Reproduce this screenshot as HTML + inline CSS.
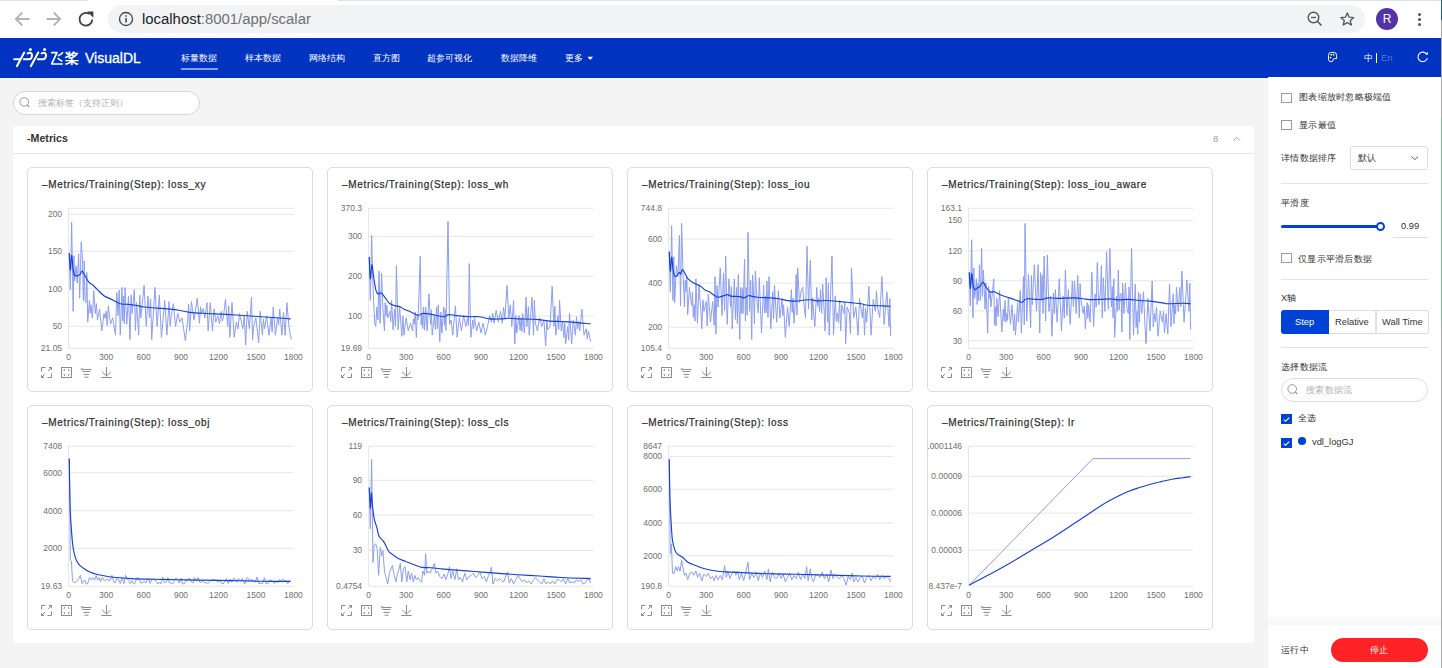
<!DOCTYPE html>
<html><head><meta charset="utf-8">
<style>
*{box-sizing:border-box;margin:0;padding:0}
html,body{width:1442px;height:668px;overflow:hidden;background:#fff;font-family:"Liberation Sans",sans-serif;position:relative}
.abs{position:absolute}
#chrome{position:absolute;left:0;top:0;width:1442px;height:38px;background:#fff}
#url{position:absolute;left:108px;top:5px;width:1257px;height:28px;border-radius:14px;background:#f1f3f4}
#urltext{position:absolute;left:142px;top:10.5px;font-size:14.9px;color:#6f6f6f;letter-spacing:0;white-space:nowrap}
#urltext b{font-weight:normal;color:#202124}
#nav{position:absolute;left:0;top:38px;width:1441px;height:40px;background:#0033bf}
.nv{position:absolute;top:14px;font-size:9.4px;color:#fff;white-space:nowrap;line-height:11px}
#main{position:absolute;left:0;top:78px;width:1268px;height:590px;background:#f4f4f4}
#side{position:absolute;left:1268px;top:77px;width:173px;height:591px;background:#fff}
#search{position:absolute;left:13px;top:91px;width:187px;height:24px;border:1px solid #d6d6d6;border-radius:12px;background:#fff}
#panel{position:absolute;left:13px;top:126px;width:1241px;height:517px;background:#fff;border-radius:3px}
#ph{position:absolute;left:0;top:0;width:1241px;height:28px;border-bottom:1px solid #e6e6e6}
.card{position:absolute;width:286px;height:225px;border:1px solid #dcdcdc;border-radius:5px;background:#fff}
.card .plot{position:absolute;left:-1px;top:-1px}
.ct{position:absolute;left:14px;top:10.5px;font-size:10px;line-height:12px;letter-spacing:0.68px;-webkit-text-stroke:0.25px #333;color:#333;white-space:nowrap}
.g{stroke:#e6e6e6;stroke-width:1;fill:none}
.yl{font-size:8.5px;fill:#707070;text-anchor:end;font-family:"Liberation Sans",sans-serif}
.xl{font-size:8.5px;fill:#707070;text-anchor:middle;font-family:"Liberation Sans",sans-serif}
.raw{fill:none;stroke:#8c9ef0;stroke-width:1;stroke-linejoin:round}
.sm{fill:none;stroke:#1641d8;stroke-width:1.15;stroke-linejoin:round}
.tb{position:absolute;left:8px;top:172px}
.sl{position:absolute;font-size:9.33px;letter-spacing:0.25px;color:#333;white-space:nowrap;line-height:11px;margin-top:1px}
.cb{position:absolute;width:11px;height:10px;border:1px solid #999;background:#fff}
.cbon{background:#0041d6;border-color:#0041d6}
.hr{position:absolute;left:1281px;width:147px;height:1px;background:#e2e2e2}
</style></head><body>
<div id="chrome">
  <div class="abs" style="left:0;top:0;width:88px;height:1px;background:#dee1e6"></div><div class="abs" style="left:338px;top:0;width:1103px;height:1px;background:#dee1e6"></div>
  <svg class="abs" style="left:0;top:0" width="100" height="38" viewBox="0 0 100 38">
    <g fill="none" stroke-width="1.8">
      <path d="M29.5 19 H16 M22.3 12.5 L15.8 19 L22.3 25.5" stroke="#b4b4b4"/>
      <path d="M46.5 19 H60 M53.7 12.5 L60.2 19 L53.7 25.5" stroke="#b4b4b4"/>
      <path d="M92.3 19.5 A6.4 6.4 0 1 1 89.6 14" stroke="#3c4043"/>
    </g>
    <path d="M87.2 11.6 L93.4 11.6 L93.4 17.8 Z" fill="#3c4043"/>
  </svg>
  <div id="url"></div>
  <svg class="abs" style="left:118px;top:11px" width="16" height="16" viewBox="0 0 16 16">
    <circle cx="8" cy="8" r="6.5" fill="none" stroke="#444" stroke-width="1.3"/>
    <rect x="7.3" y="7" width="1.5" height="4.5" fill="#444"/><rect x="7.3" y="4.3" width="1.5" height="1.5" fill="#444"/>
  </svg>
  <div id="urltext"><b>localhost</b>:8001/app/scalar</div>
  <svg class="abs" style="left:1306px;top:10px" width="20" height="20" viewBox="0 0 20 20">
    <circle cx="7.5" cy="7.5" r="5.3" fill="none" stroke="#555" stroke-width="1.4"/>
    <path d="M11.5 11.5 L15.5 15.5" stroke="#555" stroke-width="1.6"/>
    <path d="M5 7.5 H10" stroke="#555" stroke-width="1.3"/>
  </svg>
  <svg class="abs" style="left:1338px;top:9px" width="20" height="20" viewBox="0 0 20 20">
    <path d="M9.3 4 L11.2 8.2 L15.8 8.6 L12.3 11.6 L13.4 16 L9.3 13.6 L5.2 16 L6.3 11.6 L2.8 8.6 L7.4 8.2 Z" fill="none" stroke="#555" stroke-width="1.3" stroke-linejoin="round"/>
  </svg>
  <div class="abs" style="left:1376px;top:8px;width:22px;height:22px;border-radius:11px;background:#5433a8;color:#fff;font-size:12px;line-height:22px;text-align:center">R</div>
  <div class="abs" style="left:1417.8px;top:12.6px;width:3.3px;height:3.3px;border-radius:2px;background:#555"></div>
  <div class="abs" style="left:1417.8px;top:17.7px;width:3.3px;height:3.3px;border-radius:2px;background:#555"></div>
  <div class="abs" style="left:1417.8px;top:22.8px;width:3.3px;height:3.3px;border-radius:2px;background:#555"></div>
  
</div>
<div id="nav">
  <div class="nv" style="left:85px;top:12px;font-size:14px;line-height:16px;-webkit-text-stroke:0.3px #fff">VisualDL</div>
  <div class="nv" style="left:181px">标量数据</div>
  <div class="abs" style="left:181px;top:30px;width:37px;height:2px;background:#8a9ae8"></div>
  <div class="nv" style="left:245px">样本数据</div>
  <div class="nv" style="left:309px">网络结构</div>
  <div class="nv" style="left:373px">直方图</div>
  <div class="nv" style="left:427px">超参可视化</div>
  <div class="nv" style="left:501px">数据降维</div>
  <div class="nv" style="left:565px">更多</div>
<svg class="abs" style="left:587px;top:18px" width="7" height="5" viewBox="0 0 7 5"><path d="M0.5 0.8 H6 L3.25 4 Z" fill="#fff"/></svg>
<svg class="abs" style="left:12px;top:8px" width="36" height="22" viewBox="0 0 36 22">
<g fill="none" stroke="#fff" stroke-width="2" stroke-linecap="round" stroke-linejoin="round">
<path d="M2.2 13.3 H7.8"/>
<path d="M4.9 20.2 L12.2 6.5"/>
<path d="M18.8 20.2 L26.3 6.5"/>
<path d="M15.6 7.4 Q17.4 6.6 18.5 6.9 Q20.2 7.5 20 10 Q19.6 13.3 16.6 13.3 H11.8"/>
<path d="M29.6 7.4 Q31.4 6.6 32.5 6.9 Q34.2 7.5 34 10 Q33.6 13.3 30.6 13.3 H25.8"/>
</g>
<circle cx="18.4" cy="3.6" r="1.5" fill="#fff"/><circle cx="32.6" cy="3.6" r="1.5" fill="#fff"/>
</svg>
<svg class="abs" style="left:49px;top:10px" width="16" height="20" viewBox="0 0 16 20"><g fill="none" stroke="#fff" stroke-width="1.7" stroke-linecap="butt" stroke-linejoin="round"><path d="M2.1 4.6 H8 L2.8 15.6 L2.8 16 H13.8"/><path d="M14 4.2 Q11.5 7 9 7.8"/><path d="M8.6 10 Q11.3 12.5 13.3 13.3"/></g></svg>
<div class="nv" style="left:64.5px;top:12px;font-size:14px;line-height:16px;font-weight:bold">桨</div>
<svg class="abs" style="left:1322px;top:10px" width="20" height="18" viewBox="0 0 20 18"><path d="M8.6 4.4 H12.2 Q14.6 4.6 14.6 7.2 V10.6 H11.9 Q11.2 10.8 11.2 12 Q11 13.8 9 13.8 Q6.5 13.6 6.5 11.2 V7.4 Q6.6 4.5 8.6 4.4 Z" fill="none" stroke="#fff" stroke-width="0.95"/><circle cx="9.3" cy="6.7" r="0.85" fill="#fff"/><circle cx="11.6" cy="6.7" r="0.85" fill="#fff"/><circle cx="8.5" cy="9.6" r="0.85" fill="#fff"/></svg>
<svg class="abs" style="left:1416px;top:13px" width="14" height="12" viewBox="0 0 14 12"><path d="M10.8 3.3 A4.8 4.8 0 1 0 11.4 7.2" fill="none" stroke="#fff" stroke-width="1.1"/><path d="M9.2 3.6 L12 3.6 L12 0.8 Z" fill="#fff"/></svg>
  <div class="nv" style="left:1364px">中</div>
  <div class="abs" style="left:1376px;top:15px;width:1px;height:10px;background:#fff"></div>
  <div class="nv" style="left:1381px;color:#5a74d6">En</div>
</div>
<div id="main"></div>
<div id="side"></div>
<div id="search"></div>
<svg class="abs" style="left:18px;top:96px" width="14" height="14" viewBox="0 0 14 14"><circle cx="6.2" cy="5.9" r="4.3" fill="none" stroke="#9a9a9a" stroke-width="1"/><path d="M9.3 9 L11.3 11" stroke="#9a9a9a" stroke-width="1.1"/></svg>
<div class="abs" style="left:38px;top:98px;font-size:9.33px;color:#b3b3b3;white-space:nowrap;line-height:11px">搜索标签（支持正则）</div>
<div id="panel"><div id="ph"></div></div>
<div class="abs" style="left:27px;top:132px;font-size:10.67px;font-weight:bold;color:#333;line-height:12px">-Metrics</div>
<div class="abs" style="left:1213px;top:134px;font-size:9.33px;color:#999;line-height:11px">8</div>
<svg class="abs" style="left:1232px;top:135px" width="10" height="8" viewBox="0 0 10 8"><path d="M1.5 5.5 L4.8 2.3 L8 5.5" fill="none" stroke="#999" stroke-width="0.9"/></svg>
<div class="card" style="left:27px;top:167px">
<div class="ct">–Metrics/Training(Step): loss_xy</div>
<svg class="plot" width="286" height="225" viewBox="0 0 286 225"><line x1="41.60" y1="41.25" x2="266.40" y2="41.25" class="g"/>
<line x1="41.60" y1="47.33" x2="266.40" y2="47.33" class="g"/>
<text x="35.10" y="50.13" class="yl">200</text>
<line x1="41.60" y1="84.22" x2="266.40" y2="84.22" class="g"/>
<text x="35.10" y="87.02" class="yl">150</text>
<line x1="41.60" y1="121.75" x2="266.40" y2="121.75" class="g"/>
<text x="35.10" y="124.55" class="yl">100</text>
<line x1="41.60" y1="159.29" x2="266.40" y2="159.29" class="g"/>
<text x="35.10" y="162.09" class="yl">50</text>
<line x1="41.60" y1="181.21" x2="266.40" y2="181.21" class="g"/>
<line x1="41.60" y1="41.25" x2="41.60" y2="181.21" class="g"/>
<text x="35.10" y="184.01" class="yl">21.05</text>
<text x="41.60" y="193.21" class="xl">0</text>
<text x="79.07" y="193.21" class="xl">300</text>
<text x="116.53" y="193.21" class="xl">600</text>
<text x="154.00" y="193.21" class="xl">900</text>
<text x="191.47" y="193.21" class="xl">1200</text>
<text x="228.93" y="193.21" class="xl">1500</text>
<text x="266.40" y="193.21" class="xl">1800</text>
<polyline class="raw" points="42.25,85.74 43.34,122.62 44.64,55.36 46.16,144.32 46.92,88.74 47.68,113.94 49.20,98.75 50.28,116.11 51.58,86.82 52.67,131.30 54.19,74.89 55.27,87.91 56.36,133.47 57.23,93.95 58.09,133.47 58.96,135.64 59.83,105.38 60.70,155.17 62.43,133.47 63.19,146.17 63.95,137.81 65.36,151.07 66.77,123.71 68.29,146.49 69.38,136.58 70.46,153.00 72.63,142.15 74.80,163.85 76.97,146.49 78.06,151.33 79.14,144.32 80.23,158.51 81.31,138.90 83.48,157.34 85.65,150.83 88.47,168.19 89.77,125.63 91.08,148.66 92.16,123.11 93.25,168.19 94.98,120.45 95.74,153.74 96.50,129.13 97.26,156.78 98.02,120.45 99.75,157.34 101.49,129.13 103.01,172.53 104.09,127.98 105.18,146.49 107.35,122.62 108.43,163.56 109.52,135.64 111.69,168.19 112.77,128.34 113.86,150.83 117.11,118.28 119.28,159.51 121.02,129.13 122.54,150.83 123.62,131.99 124.71,172.53 127.96,120.45 130.13,159.51 132.30,128.05 134.47,170.36 137.73,133.47 139.90,168.19 142.07,134.56 143.15,158.87 144.24,148.66 146.41,136.73 148.58,159.51 150.75,146.49 152.92,155.17 155.08,150.83 158.34,173.61 160.51,155.17 161.59,137.06 162.68,163.85 164.42,134.56 167.02,153.00 170.27,131.30 172.44,156.25 173.53,139.81 174.61,146.49 176.24,141.62 177.87,150.83 180.04,135.64 181.12,163.85 183.29,135.64 185.46,163.85 187.09,141.86 188.72,155.17 190.89,148.66 192.51,156.85 194.14,144.32 195.23,154.08 196.31,150.83 198.48,132.39 200.65,159.51 201.74,139.08 202.82,170.36 204.99,135.64 207.16,170.36 209.33,155.17 210.96,161.90 212.58,146.49 215.84,161.68 217.25,148.18 218.66,177.95 220.18,144.32 222.35,161.68 224.52,130.22 225.60,172.68 226.69,159.51 228.86,150.83 231.68,175.78 233.20,144.32 235.37,168.19 236.45,152.26 237.54,161.68 239.71,148.66 241.88,168.19 244.05,150.83 245.13,165.25 246.22,139.98 248.39,168.19 250.56,150.83 251.64,158.00 252.73,142.15 254.90,168.19 256.52,145.51 258.15,168.19 259.89,135.64 262.06,160.59 264.23,172.53"/>
<path class="sm" d="M42.25 86.17 C42.44 88.99 42.94 102.81 43.34 103.09 C43.74 103.38 44.17 87.91 44.64 87.91 C45.11 87.91 45.65 99.66 46.16 103.09 C46.67 106.53 46.88 107.61 47.68 108.52 C48.47 109.42 50.03 108.70 50.93 108.52 C51.84 108.34 52.38 108.16 53.10 107.43 C53.83 106.71 54.37 103.82 55.27 104.18 C56.18 104.54 57.44 107.80 58.53 109.60 C59.61 111.41 60.52 113.58 61.78 115.03 C63.05 116.47 64.68 117.02 66.12 118.28 C67.57 119.55 68.65 120.89 70.46 122.62 C72.27 124.36 74.62 127.07 76.97 128.70 C79.32 130.33 81.85 131.05 84.57 132.39 C87.28 133.72 90.35 135.89 93.25 136.73 C96.14 137.56 99.39 137.12 101.92 137.38 C104.46 137.63 105.90 137.81 108.43 138.25 C110.97 138.68 113.50 139.51 117.11 139.98 C120.73 140.45 125.79 140.70 130.13 141.07 C134.47 141.43 139.53 141.79 143.15 142.15 C146.77 142.51 148.58 142.69 151.83 143.24 C155.08 143.78 157.98 144.86 162.68 145.41 C167.38 145.95 174.61 146.20 180.04 146.49 C185.46 146.78 189.80 146.85 195.23 147.14 C200.65 147.43 206.08 147.79 212.58 148.23 C219.09 148.66 227.05 149.24 234.28 149.75 C241.52 150.25 251.10 150.90 255.98 151.26 C260.86 151.63 262.31 151.81 263.58 151.92"/></svg>
<svg class="tb" width="80" height="40" viewBox="0 0 80 40" fill="none" stroke="#8c8c8c" stroke-width="1">
<path d="M5.5 31.5 V27.5 H9.5 M11.5 37.5 H15.5 V33.5 M12.2 30.8 L15.5 27.5 M13 27.5 H15.5 V30 M5.5 37.5 L8.8 34.2 M5.5 35 V37.5 H8"/>
<rect x="25.5" y="27.5" width="10" height="10"/>
<path d="M27.5 30.5 H28.5 V29 M32.5 29 V30.5 H33.5 M27.5 34.5 H28.5 V36 M32.5 36 V34.5 H33.5" stroke-width="0.9"/>
<circle cx="46" cy="29.3" r="0.9" stroke-width="0.8"/>
<path d="M46.8 29.5 H55.5 M46.5 31.5 H54.5 M47.5 34.5 H53.5 M48.5 37.2 H52.5"/>
<path d="M70.5 27 V36 M66.3 32 L70.5 36 L74.7 32 M65.3 37.5 H75.7"/>
</svg></div>
</div><div class="card" style="left:327px;top:167px">
<div class="ct">–Metrics/Training(Step): loss_wh</div>
<svg class="plot" width="286" height="225" viewBox="0 0 286 225"><line x1="41.60" y1="41.25" x2="266.40" y2="41.25" class="g"/>
<line x1="41.60" y1="69.46" x2="266.40" y2="69.46" class="g"/>
<text x="35.10" y="72.26" class="yl">300</text>
<line x1="41.60" y1="109.17" x2="266.40" y2="109.17" class="g"/>
<text x="35.10" y="111.97" class="yl">200</text>
<line x1="41.60" y1="149.09" x2="266.40" y2="149.09" class="g"/>
<text x="35.10" y="151.89" class="yl">100</text>
<line x1="41.60" y1="181.21" x2="266.40" y2="181.21" class="g"/>
<line x1="41.60" y1="41.25" x2="41.60" y2="181.21" class="g"/>
<text x="35.10" y="44.05" class="yl">370.3</text>
<text x="35.10" y="184.01" class="yl">19.69</text>
<text x="41.60" y="193.21" class="xl">0</text>
<text x="79.07" y="193.21" class="xl">300</text>
<text x="116.53" y="193.21" class="xl">600</text>
<text x="154.00" y="193.21" class="xl">900</text>
<text x="191.47" y="193.21" class="xl">1200</text>
<text x="228.93" y="193.21" class="xl">1500</text>
<text x="266.40" y="193.21" class="xl">1800</text>
<polyline class="raw" points="42.25,90.08 43.34,133.47 44.64,68.38 46.16,124.79 47.68,156.25 48.76,159.51 49.85,139.98 50.93,153.00 52.02,104.18 53.10,156.25 54.62,106.35 55.92,142.15 57.44,163.85 58.20,135.62 58.96,148.66 59.83,138.27 60.70,150.83 62.87,144.32 63.74,154.55 64.60,133.47 66.12,162.76 67.64,142.15 68.51,159.70 69.38,98.75 71.11,162.76 72.63,139.98 74.80,169.27 75.89,148.82 76.97,168.19 79.14,150.83 81.31,163.85 83.48,156.25 85.65,163.85 86.41,151.57 87.17,157.34 88.25,145.10 89.34,170.36 90.21,147.47 91.08,153.00 93.25,88.99 94.11,158.07 94.98,146.49 95.74,161.53 96.50,139.98 97.58,162.93 98.67,139.98 100.19,163.85 101.92,126.96 103.66,157.34 104.42,142.77 105.18,168.19 107.35,148.66 108.43,162.50 109.52,139.98 110.39,161.61 111.25,137.81 112.77,174.70 113.86,145.03 114.94,166.02 116.68,139.98 117.44,158.32 118.20,142.15 118.96,163.43 119.72,120.45 121.02,54.27 122.54,157.34 124.06,153.00 125.79,168.19 128.40,138.90 130.13,170.36 132.30,150.83 134.47,163.85 136.64,148.66 138.81,159.51 140.55,150.83 141.42,158.78 142.28,96.58 143.80,170.36 145.75,153.00 146.62,161.54 147.49,150.83 149.66,163.85 151.83,155.17 154.00,166.02 156.17,156.25 158.34,168.19 160.51,159.51 162.68,148.66 164.42,155.17 165.72,146.35 167.02,156.25 169.19,143.24 171.36,155.17 173.53,144.32 175.26,156.25 176.57,140.46 177.87,150.83 180.04,118.28 181.77,150.83 183.29,137.81 184.81,159.51 186.55,133.47 187.85,176.87 188.83,148.70 189.80,166.02 191.97,148.66 193.06,163.36 194.14,150.83 194.90,164.56 195.66,146.49 197.40,166.02 199.13,130.22 199.89,159.74 200.65,150.83 201.41,139.76 202.17,168.19 204.99,130.22 206.51,168.19 207.38,133.15 208.25,155.17 210.42,163.85 212.58,150.83 214.75,159.51 216.92,153.00 218.66,179.04 219.75,154.11 220.83,162.76 223.00,159.51 225.17,119.37 226.91,159.51 227.88,139.32 228.86,168.19 231.03,148.66 231.79,162.56 232.55,133.47 234.28,163.85 235.58,154.05 236.89,170.36 237.75,156.29 238.62,176.87 240.79,159.51 241.66,173.02 242.53,146.49 244.70,176.87 246.22,153.00 248.39,168.19 249.47,149.80 250.56,161.68 251.64,154.26 252.73,163.85 254.90,142.15 257.07,168.19 259.24,161.68 260.32,172.15 261.41,163.85 263.58,174.70"/>
<path class="sm" d="M42.25 90.08 C42.44 93.69 42.91 110.51 43.34 111.77 C43.77 113.04 44.32 98.03 44.86 97.67 C45.40 97.31 45.94 105.44 46.59 109.60 C47.25 113.76 48.04 119.73 48.76 122.62 C49.49 125.52 50.21 126.42 50.93 126.96 C51.66 127.50 52.38 125.88 53.10 125.88 C53.83 125.88 54.37 126.06 55.27 126.96 C56.18 127.87 57.44 129.86 58.53 131.30 C59.61 132.75 60.70 134.56 61.78 135.64 C62.87 136.73 63.95 137.27 65.04 137.81 C66.12 138.35 67.03 138.61 68.29 138.90 C69.56 139.19 71.19 139.00 72.63 139.55 C74.08 140.09 75.34 141.36 76.97 142.15 C78.60 142.95 80.05 143.31 82.40 144.32 C84.75 145.33 88.91 147.86 91.08 148.23 C93.25 148.59 93.61 146.71 95.42 146.49 C97.22 146.27 99.75 146.64 101.92 146.92 C104.09 147.21 105.90 147.76 108.43 148.23 C110.97 148.70 114.94 149.85 117.11 149.75 C119.28 149.64 119.28 147.76 121.45 147.58 C123.62 147.39 126.52 148.30 130.13 148.66 C133.75 149.02 139.53 149.56 143.15 149.75 C146.77 149.93 148.58 149.38 151.83 149.75 C155.08 150.11 159.06 151.55 162.68 151.92 C166.30 152.28 170.27 152.02 173.53 151.92 C176.78 151.81 179.31 151.26 182.21 151.26 C185.10 151.26 186.55 151.73 190.89 151.92 C195.23 152.10 202.82 151.99 208.25 152.35 C213.67 152.71 219.09 153.72 223.43 154.08 C227.77 154.45 230.67 154.34 234.28 154.52 C237.90 154.70 240.25 154.77 245.13 155.17 C250.01 155.57 260.50 156.62 263.58 156.91"/></svg>
<svg class="tb" width="80" height="40" viewBox="0 0 80 40" fill="none" stroke="#8c8c8c" stroke-width="1">
<path d="M5.5 31.5 V27.5 H9.5 M11.5 37.5 H15.5 V33.5 M12.2 30.8 L15.5 27.5 M13 27.5 H15.5 V30 M5.5 37.5 L8.8 34.2 M5.5 35 V37.5 H8"/>
<rect x="25.5" y="27.5" width="10" height="10"/>
<path d="M27.5 30.5 H28.5 V29 M32.5 29 V30.5 H33.5 M27.5 34.5 H28.5 V36 M32.5 36 V34.5 H33.5" stroke-width="0.9"/>
<circle cx="46" cy="29.3" r="0.9" stroke-width="0.8"/>
<path d="M46.8 29.5 H55.5 M46.5 31.5 H54.5 M47.5 34.5 H53.5 M48.5 37.2 H52.5"/>
<path d="M70.5 27 V36 M66.3 32 L70.5 36 L74.7 32 M65.3 37.5 H75.7"/>
</svg></div>
</div><div class="card" style="left:627px;top:167px">
<div class="ct">–Metrics/Training(Step): loss_iou</div>
<svg class="plot" width="286" height="225" viewBox="0 0 286 225"><line x1="41.60" y1="41.25" x2="266.40" y2="41.25" class="g"/>
<line x1="41.60" y1="72.07" x2="266.40" y2="72.07" class="g"/>
<text x="35.10" y="74.87" class="yl">600</text>
<line x1="41.60" y1="116.11" x2="266.40" y2="116.11" class="g"/>
<text x="35.10" y="118.91" class="yl">400</text>
<line x1="41.60" y1="160.16" x2="266.40" y2="160.16" class="g"/>
<text x="35.10" y="162.96" class="yl">200</text>
<line x1="41.60" y1="181.21" x2="266.40" y2="181.21" class="g"/>
<line x1="41.60" y1="41.25" x2="41.60" y2="181.21" class="g"/>
<text x="35.10" y="44.05" class="yl">744.8</text>
<text x="35.10" y="184.01" class="yl">105.4</text>
<text x="41.60" y="193.21" class="xl">0</text>
<text x="79.07" y="193.21" class="xl">300</text>
<text x="116.53" y="193.21" class="xl">600</text>
<text x="154.00" y="193.21" class="xl">900</text>
<text x="191.47" y="193.21" class="xl">1200</text>
<text x="228.93" y="193.21" class="xl">1500</text>
<text x="266.40" y="193.21" class="xl">1800</text>
<polyline class="raw" points="42.25,84.65 43.34,124.79 44.64,58.61 45.94,133.47 46.81,89.72 47.68,135.64 49.42,98.75 50.93,109.60 52.45,68.38 53.54,138.90 54.62,56.44 55.92,103.09 57.44,139.98 58.20,113.26 58.96,124.79 59.83,110.22 60.70,147.58 62.43,120.45 63.95,133.47 64.71,138.61 65.47,124.79 66.34,150.41 67.21,137.81 68.08,154.08 68.94,111.77 70.46,156.25 71.98,118.28 73.72,142.15 74.80,161.68 75.89,132.81 76.97,144.32 79.14,134.56 80.23,158.91 81.31,126.96 83.48,155.17 85.65,134.56 87.17,158.42 88.04,109.61 88.91,167.10 89.99,118.57 91.08,139.98 93.25,100.92 94.98,148.66 96.50,106.35 97.58,143.45 98.67,88.99 100.19,157.34 101.92,111.77 103.66,139.98 104.42,119.53 105.18,161.68 107.35,111.77 108.43,152.39 109.52,120.45 110.39,156.67 111.25,107.43 112.77,172.53 113.64,120.08 114.51,146.49 115.27,121.26 116.03,146.49 117.55,92.25 118.42,153.94 119.28,120.45 120.15,148.26 121.02,65.12 122.54,144.32 123.62,113.18 124.71,172.53 125.58,107.89 126.44,122.62 127.42,156.61 128.40,104.18 130.13,135.64 131.22,145.86 132.30,110.69 134.47,166.02 136.64,118.28 137.51,145.72 138.38,129.13 139.14,145.82 139.90,113.94 140.98,150.46 142.07,109.60 143.80,161.68 145.75,124.79 146.62,151.54 147.49,118.28 149.66,155.17 151.40,123.71 152.92,150.83 155.08,131.30 155.84,148.58 156.60,137.81 158.34,170.36 160.51,139.98 162.25,159.51 164.42,122.62 165.17,145.35 165.93,131.30 167.02,156.16 168.10,137.81 169.19,107.43 169.95,147.92 170.71,100.92 172.44,135.64 173.96,124.79 175.70,120.45 177.22,139.98 178.52,150.83 180.04,79.23 181.56,142.15 183.29,93.33 184.81,153.00 185.68,130.86 186.55,144.32 187.85,159.51 189.80,120.45 190.67,139.16 191.54,131.30 192.51,144.45 193.49,122.62 194.58,146.30 195.66,117.20 196.96,139.98 198.05,164.12 199.13,110.69 200.65,155.17 201.41,116.07 202.17,168.19 204.99,88.99 206.51,168.19 208.25,129.13 209.33,154.31 210.42,146.49 211.50,155.58 212.58,133.47 213.67,163.91 214.75,137.81 216.92,146.49 217.79,135.02 218.66,176.87 220.18,139.98 222.35,146.49 223.43,166.49 224.52,100.92 226.69,150.83 228.86,139.98 231.03,168.19 232.55,131.30 235.37,150.83 236.45,137.12 237.54,168.19 238.62,141.54 239.71,155.17 241.88,119.37 244.05,168.19 246.22,132.39 248.39,144.32 249.47,123.82 250.56,139.98 252.73,150.83 254.90,109.60 257.07,157.34 259.89,124.79 262.06,159.51 262.82,131.56 263.58,169.27"/>
<path class="sm" d="M42.25 84.65 C42.44 87.91 42.94 103.28 43.34 104.18 C43.74 105.08 44.17 90.26 44.64 90.08 C45.11 89.89 45.58 99.84 46.16 103.09 C46.74 106.35 47.32 108.88 48.11 109.60 C48.91 110.33 50.21 108.16 50.93 107.43 C51.66 106.71 51.98 105.34 52.45 105.26 C52.92 105.19 53.25 107.43 53.75 107.00 C54.26 106.57 54.69 102.59 55.49 102.66 C56.29 102.73 57.66 105.99 58.53 107.43 C59.40 108.88 59.61 110.07 60.70 111.34 C61.78 112.61 63.59 114.05 65.04 115.03 C66.48 116.00 67.93 116.47 69.38 117.20 C70.82 117.92 72.27 118.39 73.72 119.37 C75.16 120.34 76.61 122.15 78.06 123.06 C79.50 123.96 80.95 123.96 82.40 124.79 C83.84 125.62 85.29 127.14 86.74 128.05 C88.18 128.95 89.63 130.04 91.08 130.22 C92.52 130.40 93.79 129.57 95.42 129.13 C97.04 128.70 99.39 127.61 100.84 127.61 C102.29 127.61 102.11 128.81 104.09 129.13 C106.08 129.46 110.60 129.28 112.77 129.57 C114.94 129.86 115.67 131.01 117.11 130.87 C118.56 130.72 119.28 128.81 121.45 128.70 C123.62 128.59 126.52 129.86 130.13 130.22 C133.75 130.58 139.53 130.61 143.15 130.87 C146.77 131.12 148.58 131.23 151.83 131.74 C155.08 132.24 159.79 133.51 162.68 133.91 C165.57 134.30 166.66 134.27 169.19 134.12 C171.72 133.98 175.34 133.25 177.87 133.04 C180.40 132.82 182.21 132.68 184.38 132.82 C186.55 132.97 188.36 133.80 190.89 133.91 C193.42 134.01 195.95 133.36 199.57 133.47 C203.18 133.58 208.61 134.19 212.58 134.56 C216.56 134.92 219.82 135.28 223.43 135.64 C227.05 136.00 231.39 136.29 234.28 136.73 C237.18 137.16 237.18 137.88 240.79 138.25 C244.41 138.61 252.18 138.72 255.98 138.90 C259.78 139.08 262.31 139.26 263.58 139.33"/></svg>
<svg class="tb" width="80" height="40" viewBox="0 0 80 40" fill="none" stroke="#8c8c8c" stroke-width="1">
<path d="M5.5 31.5 V27.5 H9.5 M11.5 37.5 H15.5 V33.5 M12.2 30.8 L15.5 27.5 M13 27.5 H15.5 V30 M5.5 37.5 L8.8 34.2 M5.5 35 V37.5 H8"/>
<rect x="25.5" y="27.5" width="10" height="10"/>
<path d="M27.5 30.5 H28.5 V29 M32.5 29 V30.5 H33.5 M27.5 34.5 H28.5 V36 M32.5 36 V34.5 H33.5" stroke-width="0.9"/>
<circle cx="46" cy="29.3" r="0.9" stroke-width="0.8"/>
<path d="M46.8 29.5 H55.5 M46.5 31.5 H54.5 M47.5 34.5 H53.5 M48.5 37.2 H52.5"/>
<path d="M70.5 27 V36 M66.3 32 L70.5 36 L74.7 32 M65.3 37.5 H75.7"/>
</svg></div>
</div><div class="card" style="left:927px;top:167px">
<div class="ct">–Metrics/Training(Step): loss_iou_aware</div>
<svg class="plot" width="286" height="225" viewBox="0 0 286 225"><line x1="41.60" y1="41.25" x2="266.40" y2="41.25" class="g"/>
<line x1="41.60" y1="53.62" x2="266.40" y2="53.62" class="g"/>
<text x="35.10" y="56.42" class="yl">150</text>
<line x1="41.60" y1="83.78" x2="266.40" y2="83.78" class="g"/>
<text x="35.10" y="86.58" class="yl">120</text>
<line x1="41.60" y1="113.73" x2="266.40" y2="113.73" class="g"/>
<text x="35.10" y="116.53" class="yl">90</text>
<line x1="41.60" y1="143.89" x2="266.40" y2="143.89" class="g"/>
<text x="35.10" y="146.69" class="yl">60</text>
<line x1="41.60" y1="173.83" x2="266.40" y2="173.83" class="g"/>
<text x="35.10" y="176.63" class="yl">30</text>
<line x1="41.60" y1="181.21" x2="266.40" y2="181.21" class="g"/>
<line x1="41.60" y1="41.25" x2="41.60" y2="181.21" class="g"/>
<text x="35.10" y="44.05" class="yl">163.1</text>
<text x="41.60" y="193.21" class="xl">0</text>
<text x="79.07" y="193.21" class="xl">300</text>
<text x="116.53" y="193.21" class="xl">600</text>
<text x="154.00" y="193.21" class="xl">900</text>
<text x="191.47" y="193.21" class="xl">1200</text>
<text x="228.93" y="193.21" class="xl">1500</text>
<text x="266.40" y="193.21" class="xl">1800</text>
<polyline class="raw" points="42.25,105.26 43.34,138.90 44.64,72.72 45.94,150.83 46.81,101.04 47.68,131.30 49.42,111.77 50.17,137.47 50.93,116.11 51.69,133.71 52.45,97.67 53.54,133.47 54.62,81.40 55.49,129.43 56.36,103.09 58.09,142.15 58.85,115.71 59.61,137.81 60.70,166.02 61.57,119.61 62.43,131.30 63.19,124.68 63.95,139.98 65.47,124.79 66.77,111.77 67.53,157.47 68.29,139.98 69.05,159.04 69.81,131.30 71.11,149.75 72.63,123.71 74.80,164.93 76.32,142.15 77.19,153.99 78.06,133.47 78.92,155.36 79.79,146.49 80.55,153.41 81.31,131.30 83.48,157.34 85.00,137.81 86.74,163.85 87.60,146.71 88.47,168.19 90.64,135.64 91.40,155.12 92.16,144.32 93.25,123.42 94.33,166.02 96.50,109.60 97.26,157.77 98.02,56.44 99.75,154.08 101.49,107.43 103.66,160.59 104.42,108.54 105.18,137.81 107.35,97.67 109.52,144.32 111.04,97.67 112.77,166.02 113.64,105.65 114.51,133.47 115.27,108.04 116.03,146.49 117.11,88.99 118.63,154.08 120.37,87.91 121.89,144.32 123.62,129.13 124.92,169.27 126.44,125.88 127.42,146.70 128.40,122.62 130.13,155.17 132.30,111.77 134.47,163.85 136.21,129.13 137.29,151.07 138.38,103.09 139.90,148.66 141.42,122.62 143.15,157.34 145.32,113.94 146.41,139.92 147.49,113.94 149.23,146.49 150.75,108.52 152.26,150.83 153.13,116.73 154.00,133.47 156.17,146.49 157.25,139.08 158.34,161.68 160.08,135.64 160.83,151.46 161.59,137.81 163.11,155.17 164.85,105.26 166.58,159.51 168.10,126.96 169.19,140.16 170.27,95.50 171.79,137.81 173.53,124.79 174.40,98.59 175.26,150.83 176.35,110.69 177.87,144.32 179.60,84.65 181.34,142.15 182.86,81.40 184.38,139.98 185.25,119.50 186.11,150.83 186.87,111.79 187.63,170.36 189.80,129.13 190.56,144.23 191.32,103.09 192.19,142.78 193.06,126.96 194.14,126.96 194.90,165.16 195.66,116.11 196.96,146.49 198.48,116.11 200.00,142.15 201.30,146.49 202.06,119.94 202.82,172.53 204.56,81.40 206.51,168.19 208.25,117.20 209.11,160.46 209.98,144.32 210.74,167.30 211.50,124.79 212.37,155.11 213.24,126.96 214.75,146.49 216.49,124.79 218.01,159.51 219.09,176.87 220.83,131.30 223.00,163.85 225.17,113.94 226.25,159.85 227.34,146.49 228.42,154.66 229.51,139.98 231.03,169.27 233.20,144.32 235.37,155.17 236.45,144.41 237.54,166.02 239.06,146.49 240.79,167.10 242.53,117.20 244.05,159.51 246.22,126.96 246.98,156.81 247.74,137.81 248.60,147.01 249.47,120.45 251.21,144.32 252.73,120.45 253.81,139.86 254.90,104.18 257.07,155.17 259.89,112.86 262.06,144.32 262.82,116.13 263.58,162.76"/>
<path class="sm" d="M42.25 105.26 C42.44 107.98 42.94 121.36 43.34 121.54 C43.74 121.72 44.17 106.71 44.64 106.35 C45.11 105.99 45.58 116.66 46.16 119.37 C46.74 122.08 47.32 122.44 48.11 122.62 C48.91 122.80 50.10 121.00 50.93 120.45 C51.77 119.91 52.27 120.27 53.10 119.37 C53.94 118.46 55.02 115.03 55.92 115.03 C56.83 115.03 57.37 117.74 58.53 119.37 C59.69 121.00 61.42 123.89 62.87 124.79 C64.31 125.70 65.40 124.25 67.21 124.79 C69.02 125.33 71.19 127.03 73.72 128.05 C76.25 129.06 79.50 129.89 82.40 130.87 C85.29 131.84 88.98 133.18 91.08 133.91 C93.17 134.63 93.53 135.57 94.98 135.21 C96.43 134.85 97.51 132.21 99.75 131.74 C102.00 131.27 105.90 132.28 108.43 132.39 C110.97 132.50 112.77 132.64 114.94 132.39 C117.11 132.13 118.92 131.05 121.45 130.87 C123.98 130.69 125.79 131.30 130.13 131.30 C134.47 131.30 143.15 130.80 147.49 130.87 C151.83 130.94 153.64 131.45 156.17 131.74 C158.70 132.03 159.79 132.50 162.68 132.60 C165.57 132.71 169.91 132.50 173.53 132.39 C177.14 132.28 181.48 131.88 184.38 131.95 C187.27 132.03 187.99 132.75 190.89 132.82 C193.78 132.89 198.12 132.28 201.74 132.39 C205.35 132.50 208.97 133.18 212.58 133.47 C216.20 133.76 219.82 133.76 223.43 134.12 C227.05 134.48 231.39 135.21 234.28 135.64 C237.18 136.08 237.18 136.62 240.79 136.73 C244.41 136.83 252.18 136.29 255.98 136.29 C259.78 136.29 262.31 136.65 263.58 136.73"/></svg>
<svg class="tb" width="80" height="40" viewBox="0 0 80 40" fill="none" stroke="#8c8c8c" stroke-width="1">
<path d="M5.5 31.5 V27.5 H9.5 M11.5 37.5 H15.5 V33.5 M12.2 30.8 L15.5 27.5 M13 27.5 H15.5 V30 M5.5 37.5 L8.8 34.2 M5.5 35 V37.5 H8"/>
<rect x="25.5" y="27.5" width="10" height="10"/>
<path d="M27.5 30.5 H28.5 V29 M32.5 29 V30.5 H33.5 M27.5 34.5 H28.5 V36 M32.5 36 V34.5 H33.5" stroke-width="0.9"/>
<circle cx="46" cy="29.3" r="0.9" stroke-width="0.8"/>
<path d="M46.8 29.5 H55.5 M46.5 31.5 H54.5 M47.5 34.5 H53.5 M48.5 37.2 H52.5"/>
<path d="M70.5 27 V36 M66.3 32 L70.5 36 L74.7 32 M65.3 37.5 H75.7"/>
</svg></div>
</div><div class="card" style="left:27px;top:405px">
<div class="ct">–Metrics/Training(Step): loss_obj</div>
<svg class="plot" width="286" height="225" viewBox="0 0 286 225"><line x1="41.60" y1="41.25" x2="266.40" y2="41.25" class="g"/>
<line x1="41.60" y1="67.73" x2="266.40" y2="67.73" class="g"/>
<text x="35.10" y="70.53" class="yl">6000</text>
<line x1="41.60" y1="105.70" x2="266.40" y2="105.70" class="g"/>
<text x="35.10" y="108.50" class="yl">4000</text>
<line x1="41.60" y1="143.24" x2="266.40" y2="143.24" class="g"/>
<text x="35.10" y="146.04" class="yl">2000</text>
<line x1="41.60" y1="181.21" x2="266.40" y2="181.21" class="g"/>
<line x1="41.60" y1="41.25" x2="41.60" y2="181.21" class="g"/>
<text x="35.10" y="44.05" class="yl">7408</text>
<text x="35.10" y="184.01" class="yl">19.63</text>
<text x="41.60" y="193.21" class="xl">0</text>
<text x="79.07" y="193.21" class="xl">300</text>
<text x="116.53" y="193.21" class="xl">600</text>
<text x="154.00" y="193.21" class="xl">900</text>
<text x="191.47" y="193.21" class="xl">1200</text>
<text x="228.93" y="193.21" class="xl">1500</text>
<text x="266.40" y="193.21" class="xl">1800</text>
<polyline class="raw" points="42.25,53.62 42.91,103.09 43.34,155.17 44.42,156.25 45.51,175.78 47.25,177.95 48.98,176.87 50.28,175.78 51.80,173.61 53.32,170.36 55.06,178.60 56.58,175.78 57.88,175.13 59.18,179.04 60.70,178.60 62.43,172.53 64.39,175.13 65.69,172.53 67.64,175.13 69.16,170.36 70.46,175.13 71.98,172.53 73.50,176.87 75.24,172.53 76.75,175.13 78.27,175.78 80.01,173.61 81.75,175.78 83.26,175.13 85.00,170.36 86.74,176.87 88.04,177.95 89.77,173.61 91.51,174.26 93.25,178.60 94.98,172.53 96.93,178.60 98.45,170.36 100.19,173.61 101.92,175.78 103.23,178.60 104.96,175.78 106.26,178.60 107.57,179.04 109.08,175.13 110.39,172.53 112.34,174.49 114.08,178.29 115.81,177.48 117.11,176.19 118.85,178.06 120.15,175.10 121.45,173.54 123.19,178.47 124.92,174.01 126.23,174.26 127.96,174.22 129.26,176.45 131.00,179.02 132.52,177.09 133.82,178.95 135.77,172.32 137.51,177.83 139.46,176.61 140.98,172.48 142.28,177.66 144.02,177.92 145.54,178.91 147.06,176.47 149.01,172.83 150.96,174.68 152.26,177.96 154.00,173.07 155.52,178.87 157.47,178.76 159.21,175.42 160.94,175.36 162.46,172.88 163.98,176.45 165.93,178.12 167.45,172.71 169.19,175.67 170.92,172.53 172.66,176.92 173.96,177.37 175.70,175.98 177.43,177.89 179.17,177.44 180.91,178.74 182.64,176.61 183.94,175.39 185.68,174.36 187.42,175.31 189.15,174.51 190.89,177.22 192.84,174.52 194.36,178.13 196.31,178.87 198.05,175.69 199.57,173.47 201.30,178.60 203.25,174.06 204.56,177.09 206.51,173.29 208.46,174.20 210.20,177.10 211.50,173.45 213.45,176.43 214.97,173.62 216.49,176.47 217.79,178.94 219.31,173.25 220.83,172.86 222.35,175.45 223.65,174.98 225.39,174.73 226.69,176.19 228.21,177.08 229.94,172.10 231.90,178.71 233.85,178.11 235.58,178.79 237.32,172.75 239.06,178.70 240.79,178.75 242.31,175.00 244.05,175.34 245.57,176.23 247.52,178.74 249.04,176.32 250.77,177.80 252.08,174.75 253.81,176.02 255.33,174.35 257.28,175.07 258.80,175.52 260.75,178.85 262.71,174.76"/>
<path class="sm" d="M42.25 53.62 C42.33 58.25 42.51 72.43 42.69 81.40 C42.87 90.36 43.05 100.20 43.34 107.43 C43.63 114.67 44.06 119.73 44.42 124.79 C44.79 129.86 45.04 133.83 45.51 137.81 C45.98 141.79 46.52 145.59 47.25 148.66 C47.97 151.73 48.87 154.27 49.85 156.25 C50.83 158.24 51.84 159.33 53.10 160.59 C54.37 161.86 55.82 162.76 57.44 163.85 C59.07 164.93 60.88 166.20 62.87 167.10 C64.86 168.01 66.85 168.62 69.38 169.27 C71.91 169.92 74.80 170.47 78.06 171.01 C81.31 171.55 84.57 172.09 88.91 172.53 C93.25 172.96 97.95 173.32 104.09 173.61 C110.24 173.90 118.56 174.08 125.79 174.26 C133.03 174.44 140.26 174.55 147.49 174.70 C154.72 174.84 161.96 175.02 169.19 175.13 C176.42 175.24 183.65 175.24 190.89 175.35 C198.12 175.46 205.35 175.64 212.58 175.78 C219.82 175.93 225.78 176.11 234.28 176.22 C242.78 176.33 258.69 176.40 263.58 176.43"/></svg>
<svg class="tb" width="80" height="40" viewBox="0 0 80 40" fill="none" stroke="#8c8c8c" stroke-width="1">
<path d="M5.5 31.5 V27.5 H9.5 M11.5 37.5 H15.5 V33.5 M12.2 30.8 L15.5 27.5 M13 27.5 H15.5 V30 M5.5 37.5 L8.8 34.2 M5.5 35 V37.5 H8"/>
<rect x="25.5" y="27.5" width="10" height="10"/>
<path d="M27.5 30.5 H28.5 V29 M32.5 29 V30.5 H33.5 M27.5 34.5 H28.5 V36 M32.5 36 V34.5 H33.5" stroke-width="0.9"/>
<circle cx="46" cy="29.3" r="0.9" stroke-width="0.8"/>
<path d="M46.8 29.5 H55.5 M46.5 31.5 H54.5 M47.5 34.5 H53.5 M48.5 37.2 H52.5"/>
<path d="M70.5 27 V36 M66.3 32 L70.5 36 L74.7 32 M65.3 37.5 H75.7"/>
</svg></div>
</div><div class="card" style="left:327px;top:405px">
<div class="ct">–Metrics/Training(Step): loss_cls</div>
<svg class="plot" width="286" height="225" viewBox="0 0 286 225"><line x1="41.60" y1="41.25" x2="266.40" y2="41.25" class="g"/>
<line x1="41.60" y1="75.32" x2="266.40" y2="75.32" class="g"/>
<text x="35.10" y="78.12" class="yl">90</text>
<line x1="41.60" y1="110.04" x2="266.40" y2="110.04" class="g"/>
<text x="35.10" y="112.84" class="yl">60</text>
<line x1="41.60" y1="145.41" x2="266.40" y2="145.41" class="g"/>
<text x="35.10" y="148.21" class="yl">30</text>
<line x1="41.60" y1="181.21" x2="266.40" y2="181.21" class="g"/>
<line x1="41.60" y1="41.25" x2="41.60" y2="181.21" class="g"/>
<text x="35.10" y="44.05" class="yl">119</text>
<text x="35.10" y="184.01" class="yl">0.4754</text>
<text x="41.60" y="193.21" class="xl">0</text>
<text x="79.07" y="193.21" class="xl">300</text>
<text x="116.53" y="193.21" class="xl">600</text>
<text x="154.00" y="193.21" class="xl">900</text>
<text x="191.47" y="193.21" class="xl">1200</text>
<text x="228.93" y="193.21" class="xl">1500</text>
<text x="266.40" y="193.21" class="xl">1800</text>
<polyline class="raw" points="42.25,82.48 43.34,123.71 44.64,54.27 45.94,157.34 47.25,139.98 48.76,138.90 50.28,144.32 51.58,170.36 53.32,142.15 54.62,150.83 55.92,145.41 57.44,166.02 58.96,172.53 60.70,179.04 62.43,168.19 63.95,163.85 65.47,160.59 67.21,170.36 68.94,176.87 70.46,168.19 71.55,166.02 73.28,158.42 74.80,176.87 76.32,163.85 78.06,161.68 79.79,176.87 81.31,166.02 83.05,174.70 84.57,168.19 86.30,176.87 87.82,170.36 89.34,174.70 91.08,172.53 92.81,175.78 94.55,176.87 95.85,166.02 97.58,170.36 98.67,148.66 99.75,168.19 101.49,166.02 103.01,168.19 105.18,163.85 107.35,158.42 108.87,168.19 110.60,166.02 112.77,171.44 114.94,173.61 117.11,169.27 118.85,174.70 121.02,168.19 122.54,161.68 124.06,173.61 125.79,166.02 127.96,174.70 129.70,163.85 131.43,174.70 133.39,172.53 135.56,176.87 137.73,168.19 139.90,174.70 142.07,171.44 144.24,170.36 146.41,168.19 148.58,172.53 150.75,170.36 152.92,167.10 155.08,173.61 157.25,171.44 159.42,176.87 161.59,170.36 163.11,167.10 164.42,162.11 165.93,179.04 168.10,173.61 170.27,175.78 172.44,173.61 174.61,175.78 176.78,176.87 178.95,170.36 180.47,167.10 182.21,177.95 184.38,173.61 186.55,179.04 188.72,174.70 190.89,170.36 193.06,173.61 195.23,176.87 197.40,174.70 199.57,177.95 201.74,175.78 203.91,179.04 206.08,175.78 208.25,172.53 210.42,174.70 212.58,176.87 214.75,179.04 216.92,173.61 219.09,179.04 221.26,176.87 223.43,179.04 225.60,175.78 227.77,179.04 229.94,174.70 232.11,174.70 234.28,176.87 236.45,173.61 238.62,179.04 240.79,173.61 242.96,177.95 245.13,176.87 247.30,177.95 249.47,174.70 251.64,176.87 253.81,174.70 255.98,179.04 258.15,177.95 260.32,174.70 262.06,173.61 263.58,177.95"/>
<path class="sm" d="M42.25 82.48 C42.44 85.92 42.98 102.19 43.34 103.09 C43.70 104.00 44.06 88.27 44.42 87.91 C44.79 87.54 45.04 96.58 45.51 100.92 C45.98 105.26 46.52 110.33 47.25 113.94 C47.97 117.56 49.05 119.73 49.85 122.62 C50.64 125.52 51.01 129.13 52.02 131.30 C53.03 133.47 54.84 134.19 55.92 135.64 C57.01 137.09 57.55 138.17 58.53 139.98 C59.50 141.79 60.70 144.97 61.78 146.49 C62.87 148.01 63.59 148.01 65.04 149.09 C66.48 150.18 68.29 151.81 70.46 153.00 C72.63 154.19 75.34 155.17 78.06 156.25 C80.77 157.34 83.92 158.50 86.74 159.51 C89.56 160.52 92.09 161.79 94.98 162.33 C97.87 162.87 100.77 162.51 104.09 162.76 C107.42 163.02 111.33 163.49 114.94 163.85 C118.56 164.21 120.37 164.50 125.79 164.93 C131.22 165.37 140.26 165.91 147.49 166.45 C154.72 167.00 161.96 167.65 169.19 168.19 C176.42 168.73 183.65 169.24 190.89 169.71 C198.12 170.18 205.35 170.54 212.58 171.01 C219.82 171.48 225.78 172.09 234.28 172.53 C242.78 172.96 258.69 173.43 263.58 173.61"/></svg>
<svg class="tb" width="80" height="40" viewBox="0 0 80 40" fill="none" stroke="#8c8c8c" stroke-width="1">
<path d="M5.5 31.5 V27.5 H9.5 M11.5 37.5 H15.5 V33.5 M12.2 30.8 L15.5 27.5 M13 27.5 H15.5 V30 M5.5 37.5 L8.8 34.2 M5.5 35 V37.5 H8"/>
<rect x="25.5" y="27.5" width="10" height="10"/>
<path d="M27.5 30.5 H28.5 V29 M32.5 29 V30.5 H33.5 M27.5 34.5 H28.5 V36 M32.5 36 V34.5 H33.5" stroke-width="0.9"/>
<circle cx="46" cy="29.3" r="0.9" stroke-width="0.8"/>
<path d="M46.8 29.5 H55.5 M46.5 31.5 H54.5 M47.5 34.5 H53.5 M48.5 37.2 H52.5"/>
<path d="M70.5 27 V36 M66.3 32 L70.5 36 L74.7 32 M65.3 37.5 H75.7"/>
</svg></div>
</div><div class="card" style="left:627px;top:405px">
<div class="ct">–Metrics/Training(Step): loss</div>
<svg class="plot" width="286" height="225" viewBox="0 0 286 225"><line x1="41.60" y1="41.25" x2="266.40" y2="41.25" class="g"/>
<line x1="41.60" y1="51.67" x2="266.40" y2="51.67" class="g"/>
<text x="35.10" y="54.47" class="yl">8000</text>
<line x1="41.60" y1="84.22" x2="266.40" y2="84.22" class="g"/>
<text x="35.10" y="87.02" class="yl">6000</text>
<line x1="41.60" y1="117.85" x2="266.40" y2="117.85" class="g"/>
<text x="35.10" y="120.65" class="yl">4000</text>
<line x1="41.60" y1="150.83" x2="266.40" y2="150.83" class="g"/>
<text x="35.10" y="153.63" class="yl">2000</text>
<line x1="41.60" y1="181.21" x2="266.40" y2="181.21" class="g"/>
<line x1="41.60" y1="41.25" x2="41.60" y2="181.21" class="g"/>
<text x="35.10" y="44.05" class="yl">8647</text>
<text x="35.10" y="184.01" class="yl">190.8</text>
<text x="41.60" y="193.21" class="xl">0</text>
<text x="79.07" y="193.21" class="xl">300</text>
<text x="116.53" y="193.21" class="xl">600</text>
<text x="154.00" y="193.21" class="xl">900</text>
<text x="191.47" y="193.21" class="xl">1200</text>
<text x="228.93" y="193.21" class="xl">1500</text>
<text x="266.40" y="193.21" class="xl">1800</text>
<polyline class="raw" points="42.25,54.27 42.91,120.45 43.34,148.66 44.42,138.90 45.51,168.19 47.25,168.19 48.76,161.68 50.28,166.02 51.58,161.68 53.10,166.02 54.62,155.17 55.92,162.76 57.44,170.36 58.96,168.19 60.70,174.70 62.87,168.19 65.04,167.10 66.77,170.36 68.94,166.02 70.46,172.53 72.63,168.19 74.80,175.78 76.97,169.27 79.14,171.44 81.31,168.19 83.48,173.61 85.65,171.44 87.17,175.78 88.91,170.36 91.08,174.70 93.25,170.36 95.42,174.70 97.58,160.59 99.32,172.53 100.84,166.02 103.01,173.61 105.18,168.19 107.35,166.02 108.87,170.36 110.60,166.02 112.34,174.70 114.51,168.19 116.68,175.78 118.85,167.10 121.02,157.34 122.54,174.70 124.71,168.19 126.88,172.53 129.05,167.10 131.22,175.78 133.39,168.19 135.56,172.53 137.73,166.02 139.90,174.70 141.42,163.85 143.15,176.87 145.32,167.10 147.49,172.53 149.66,173.61 151.83,168.19 154.00,173.61 156.17,169.27 158.34,176.87 160.51,172.53 162.68,168.19 164.85,174.70 167.02,170.36 169.19,173.61 171.36,167.10 173.53,174.70 175.70,169.27 177.87,173.61 179.60,161.68 181.12,175.78 183.29,163.85 184.81,173.61 186.55,176.87 188.72,169.27 190.89,170.36 193.06,172.53 195.23,167.10 197.40,173.61 199.57,169.27 201.74,176.87 203.91,164.93 206.08,173.61 208.25,169.27 210.42,172.53 212.58,173.61 214.75,170.36 216.92,173.61 219.09,180.12 221.26,171.44 223.43,174.70 225.17,168.19 226.91,176.87 228.86,172.53 231.03,176.87 233.20,172.53 235.37,171.44 237.54,177.95 239.71,172.53 241.88,170.36 244.05,175.78 246.22,171.44 248.39,173.61 250.56,169.27 252.73,174.70 254.90,170.36 257.07,173.61 259.89,171.44 262.06,173.61 263.58,176.87"/>
<path class="sm" d="M42.25 54.27 C42.33 58.79 42.51 73.26 42.69 81.40 C42.87 89.53 43.05 96.22 43.34 103.09 C43.63 109.97 44.06 117.20 44.42 122.62 C44.79 128.05 44.97 132.03 45.51 135.64 C46.05 139.26 46.96 142.15 47.68 144.32 C48.40 146.49 48.94 147.58 49.85 148.66 C50.75 149.75 52.09 150.18 53.10 150.83 C54.12 151.48 55.02 151.84 55.92 152.57 C56.83 153.29 57.55 154.30 58.53 155.17 C59.50 156.04 60.34 156.98 61.78 157.77 C63.23 158.57 64.86 159.04 67.21 159.94 C69.56 160.85 72.27 162.19 75.89 163.20 C79.50 164.21 84.20 165.37 88.91 166.02 C93.61 166.67 97.95 166.74 104.09 167.10 C110.24 167.47 118.56 167.90 125.79 168.19 C133.03 168.48 140.26 168.66 147.49 168.84 C154.72 169.02 161.96 169.09 169.19 169.27 C176.42 169.45 183.65 169.74 190.89 169.92 C198.12 170.11 205.35 170.18 212.58 170.36 C219.82 170.54 225.78 170.83 234.28 171.01 C242.78 171.19 258.69 171.37 263.58 171.44"/></svg>
<svg class="tb" width="80" height="40" viewBox="0 0 80 40" fill="none" stroke="#8c8c8c" stroke-width="1">
<path d="M5.5 31.5 V27.5 H9.5 M11.5 37.5 H15.5 V33.5 M12.2 30.8 L15.5 27.5 M13 27.5 H15.5 V30 M5.5 37.5 L8.8 34.2 M5.5 35 V37.5 H8"/>
<rect x="25.5" y="27.5" width="10" height="10"/>
<path d="M27.5 30.5 H28.5 V29 M32.5 29 V30.5 H33.5 M27.5 34.5 H28.5 V36 M32.5 36 V34.5 H33.5" stroke-width="0.9"/>
<circle cx="46" cy="29.3" r="0.9" stroke-width="0.8"/>
<path d="M46.8 29.5 H55.5 M46.5 31.5 H54.5 M47.5 34.5 H53.5 M48.5 37.2 H52.5"/>
<path d="M70.5 27 V36 M66.3 32 L70.5 36 L74.7 32 M65.3 37.5 H75.7"/>
</svg></div>
</div><div class="card" style="left:927px;top:405px">
<div class="ct">–Metrics/Training(Step): lr</div>
<svg class="plot" width="286" height="225" viewBox="0 0 286 225"><line x1="41.60" y1="41.25" x2="266.40" y2="41.25" class="g"/>
<line x1="41.60" y1="71.20" x2="266.40" y2="71.20" class="g"/>
<text x="35.10" y="74.00" class="yl">0.00009</text>
<line x1="41.60" y1="108.08" x2="266.40" y2="108.08" class="g"/>
<text x="35.10" y="110.88" class="yl">0.00006</text>
<line x1="41.60" y1="144.97" x2="266.40" y2="144.97" class="g"/>
<text x="35.10" y="147.77" class="yl">0.00003</text>
<line x1="41.60" y1="181.21" x2="266.40" y2="181.21" class="g"/>
<line x1="41.60" y1="41.25" x2="41.60" y2="181.21" class="g"/>
<text x="35.10" y="44.05" class="yl">0.0001146</text>
<text x="35.10" y="184.01" class="yl">8.437e-7</text>
<text x="41.60" y="193.21" class="xl">0</text>
<text x="79.07" y="193.21" class="xl">300</text>
<text x="116.53" y="193.21" class="xl">600</text>
<text x="154.00" y="193.21" class="xl">900</text>
<text x="191.47" y="193.21" class="xl">1200</text>
<text x="228.93" y="193.21" class="xl">1500</text>
<text x="266.40" y="193.21" class="xl">1800</text>
<polyline class="raw" points="42.25,180.12 165.93,53.62 263.58,53.62"/>
<path class="sm" d="M42.25 180.12 C45.33 178.50 54.01 173.97 60.70 170.36 C67.39 166.74 75.16 162.58 82.40 158.42 C89.63 154.27 96.86 149.75 104.09 145.41 C111.33 141.07 118.56 136.91 125.79 132.39 C133.03 127.87 140.62 122.80 147.49 118.28 C154.36 113.76 161.59 108.81 167.02 105.26 C172.44 101.72 176.06 99.37 180.04 97.02 C184.02 94.67 187.27 92.97 190.89 91.16 C194.50 89.35 198.12 87.62 201.74 86.17 C205.35 84.72 208.97 83.64 212.58 82.48 C216.20 81.32 219.82 80.20 223.43 79.23 C227.05 78.25 230.67 77.45 234.28 76.62 C237.90 75.79 241.52 74.89 245.13 74.24 C248.75 73.58 252.91 73.15 255.98 72.72 C259.06 72.28 262.31 71.81 263.58 71.63"/></svg>
<svg class="tb" width="80" height="40" viewBox="0 0 80 40" fill="none" stroke="#8c8c8c" stroke-width="1">
<path d="M5.5 31.5 V27.5 H9.5 M11.5 37.5 H15.5 V33.5 M12.2 30.8 L15.5 27.5 M13 27.5 H15.5 V30 M5.5 37.5 L8.8 34.2 M5.5 35 V37.5 H8"/>
<rect x="25.5" y="27.5" width="10" height="10"/>
<path d="M27.5 30.5 H28.5 V29 M32.5 29 V30.5 H33.5 M27.5 34.5 H28.5 V36 M32.5 36 V34.5 H33.5" stroke-width="0.9"/>
<circle cx="46" cy="29.3" r="0.9" stroke-width="0.8"/>
<path d="M46.8 29.5 H55.5 M46.5 31.5 H54.5 M47.5 34.5 H53.5 M48.5 37.2 H52.5"/>
<path d="M70.5 27 V36 M66.3 32 L70.5 36 L74.7 32 M65.3 37.5 H75.7"/>
</svg></div>
</div>
<!-- sidebar -->
<div class="cb" style="left:1281px;top:93px"></div><div class="sl" style="left:1299px;top:91px">图表缩放时忽略极端值</div>
<div class="cb" style="left:1281px;top:120px"></div><div class="sl" style="left:1299px;top:119px">显示最值</div>
<div class="sl" style="left:1281px;top:152px">详情数据排序</div>
<div class="abs" style="left:1350px;top:146px;width:78px;height:24px;border:1px solid #ddd;border-radius:3px"></div>
<div class="sl" style="left:1358px;top:152px">默认</div>
<svg class="abs" style="left:1410px;top:154px" width="10" height="8" viewBox="0 0 10 8"><path d="M1.5 2.5 L4.8 5.6 L8 2.5" fill="none" stroke="#555" stroke-width="1"/></svg>
<div class="hr" style="top:183px"></div>
<div class="sl" style="left:1281px;top:197px">平滑度</div>
<div class="abs" style="left:1281px;top:225px;width:99px;height:3px;border-radius:2px;background:#0041d6"></div>
<div class="abs" style="left:1376px;top:222px;width:9px;height:9px;border-radius:5px;border:2px solid #0041d6;background:#fff"></div>
<div class="sl" style="left:1401px;top:220px;letter-spacing:0">0.99</div>
<div class="abs" style="left:1393px;top:237px;width:35px;height:1px;background:#ddd"></div>
<div class="cb" style="left:1281px;top:253px"></div><div class="sl" style="left:1298px;top:253px">仅显示平滑后数据</div>
<div class="hr" style="top:279px"></div>
<div class="sl" style="left:1281px;top:292px">X轴</div>
<div class="abs" style="left:1281px;top:310px;width:48px;height:24px;background:#0041d6;border-radius:3px 0 0 3px"></div>
<div class="abs" style="left:1329px;top:310px;width:100px;height:24px;border:1px solid #ddd;border-left:none;border-radius:0 3px 3px 0"></div>
<div class="abs" style="left:1375px;top:310px;width:2px;height:24px;background:#e2e2e2"></div>
<div class="sl" style="left:1295px;top:316px;color:#fff;letter-spacing:0">Step</div>
<div class="sl" style="left:1335px;top:316px;letter-spacing:0">Relative</div>
<div class="sl" style="left:1382px;top:316px;letter-spacing:0">Wall Time</div>
<div class="hr" style="top:347px"></div>
<div class="sl" style="left:1281px;top:361px">选择数据流</div>
<div class="abs" style="left:1281px;top:378px;width:147px;height:24px;border:1px solid #ddd;border-radius:12px"></div>
<div class="sl" style="left:1306px;top:384px;color:#b3b3b3">搜索数据流</div>
<svg class="abs" style="left:1286px;top:383px" width="14" height="14" viewBox="0 0 14 14"><circle cx="6.2" cy="5.9" r="4.3" fill="none" stroke="#9a9a9a" stroke-width="1"/><path d="M9.3 9 L11.3 11" stroke="#9a9a9a" stroke-width="1.1"/></svg>
<div class="cb cbon" style="left:1281px;top:414px"><svg width="9" height="9" viewBox="0 0 9 9" style="position:absolute;left:0;top:0"><path d="M1.8 4.6 L3.6 6.3 L7.2 2.6" fill="none" stroke="#fff" stroke-width="1.1"/></svg></div><div class="sl" style="left:1298px;top:412px">全选</div>
<div class="cb cbon" style="left:1281px;top:438px"><svg width="9" height="9" viewBox="0 0 9 9" style="position:absolute;left:0;top:0"><path d="M1.8 4.6 L3.6 6.3 L7.2 2.6" fill="none" stroke="#fff" stroke-width="1.1"/></svg></div>
<div class="abs" style="left:1298px;top:437px;width:8px;height:8px;border-radius:4px;background:#0041d6"></div>
<div class="sl" style="left:1312px;top:436px;letter-spacing:0">vdl_logGJ</div>
<div class="abs" style="left:1268px;top:612px;width:173px;height:13px;background:linear-gradient(#fff,#f6f6f6)"></div>
<div class="sl" style="left:1281px;top:644px">运行中</div>
<div class="abs" style="left:1331px;top:638px;width:97px;height:24px;border-radius:12px;background:#ff2226"></div>
<div class="sl" style="left:1370px;top:644px;color:#fff">停止</div>
<div class="abs" style="left:1441px;top:0;width:1px;height:668px;background:#a9a9a9"></div>
<div class="abs" style="left:1441px;top:118px;width:1px;height:203px;background:#84b798"></div>
<div class="abs" style="left:1441px;top:0;width:1px;height:20px;background:#245f7e"></div>
</body></html>
